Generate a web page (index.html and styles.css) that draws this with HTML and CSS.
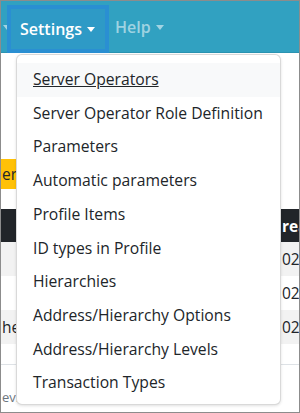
FILE: index.html
```html
<!DOCTYPE html>
<html>
<head>
<meta charset="utf-8">
<link rel="stylesheet" href="styles.css">
</head>
<body>
<div class="frame">
  <nav class="navbar">
    <div class="nav-link prev"><span class="caret"></span></div>
    <div class="nav-link active">Settings<span class="caret"></span></div>
    <div class="nav-link muted">Help<span class="caret"></span></div>
  </nav>
  <main class="content">
    <div class="alert">er</div>
    <div class="table">
      <div class="row head"><span class="cell first"></span><span class="cell last">rea</span></div>
      <div class="row striped"><span class="cell first"></span><span class="cell last">020</span></div>
      <div class="row"><span class="cell first"></span><span class="cell last">020</span></div>
      <div class="row striped"><span class="cell first">he</span><span class="cell last">020</span></div>
      <div class="row short"></div>
    </div>
    <div class="footer">ev.</div>
  </main>
  <div class="dropdown">
    <a class="item hover">Server Operators</a>
    <a class="item">Server Operator Role Definition</a>
    <a class="item">Parameters</a>
    <a class="item">Automatic parameters</a>
    <a class="item">Profile Items</a>
    <a class="item">ID types in Profile</a>
    <a class="item">Hierarchies</a>
    <a class="item">Address/Hierarchy Options</a>
    <a class="item">Address/Hierarchy Levels</a>
    <a class="item">Transaction Types</a>
  </div>
</div>
</body>
</html>
```
FILE: styles.css
```css
html, body { margin: 0; padding: 0; background: #fff; }
body { font-family: "Open Sans", "Noto Sans", sans-serif; color: #212529; }
.frame {
  position: relative;
  width: 300px;
  height: 413px;
  box-sizing: border-box;
  border: 1px solid #8c8c8c;
  overflow: hidden;
  background: #fff;
}
.navbar {
  height: 52px;
  background: #31a1c1;
  border-bottom: 1px solid #2b93b1;
  display: flex;
  align-items: center;
  box-sizing: border-box;
}
.nav-link {
  display: flex;
  align-items: center;
  font-size: 16px;
  font-weight: 600;
  color: #fff;
  height: 40px;
  box-sizing: border-box;
  white-space: nowrap;
}
.nav-link.prev { width: 9px; margin-left: -3px; }
.nav-link.prev .caret { border-top-color: rgba(255,255,255,0.55); }
.nav-link.active {
  background: #2e9ac6;
  border: 4px solid #2a8fd2;
  height: 48px;
  padding: 0 10px 0 9px;
  margin-top: 4px;
}
.nav-link.muted { color: rgba(255,255,255,0.55); padding-left: 6px; }
.nav-link.muted .caret { border-top-color: rgba(255,255,255,0.55); }
.caret {
  display: inline-block;
  width: 0; height: 0;
  margin-left: 5px;
  border-top: 5px solid #fff;
  border-left: 4px solid transparent;
  border-right: 4px solid transparent;
  margin-top: 1px;
}
.content { font-size: 15.5px; }
.alert {
  margin-top: 106px;
  width: 150px;
  height: 30px;
  line-height: 30px;
  background: #ffc107;
  color: #212529;
  padding-left: 1px;
}
.table { margin-top: 20px; }
.row {
  display: flex;
  height: 34px;
  align-items: center;
  white-space: nowrap;
}
.row.head { height: 33px; background: #212529; color: #fff; font-weight: 700; }
.row.striped { background: #f2f2f2; }
.row.short { height: 20px; border-bottom: 1px solid #dee2e6; }
.cell.first { flex: 1; padding-left: 1px; }
.cell.last { width: 17px; }
.footer { font-size: 13px; color: #6c757d; margin-top: 23px; padding-left: 1px; }
.dropdown {
  position: absolute;
  left: 15px;
  top: 53px;
  width: 265px;
  box-sizing: border-box;
  background: #fff;
  border: 1px solid rgba(0,0,0,0.15);
  border-radius: 6px;
  box-shadow: 0 1px 3px rgba(0,0,0,0.12);
  padding: 8px 0 4px;
}
.item {
  display: block;
  padding: 6px 16px;
  line-height: 21.7px;
  font-size: 15.7px;
  color: #212529;
  white-space: nowrap;
}
.item.hover { background: #f8f9fa; text-decoration: underline; }
```
